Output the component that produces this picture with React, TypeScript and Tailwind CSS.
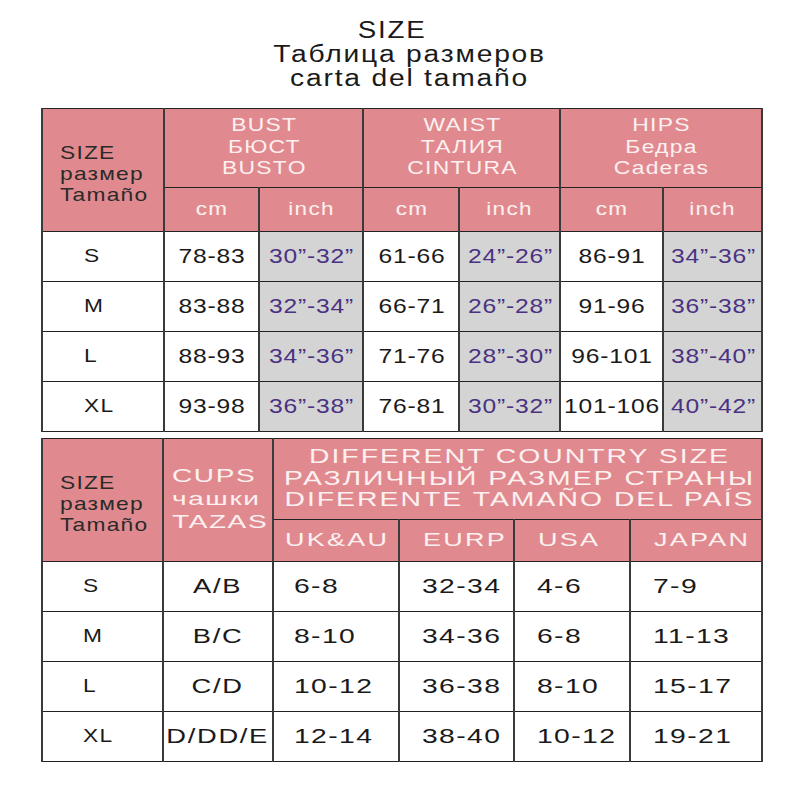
import React from 'react'

const pink = 'bg-[#e08a8f]'
const headTxt = 'text-[#fdf0f0]'

const bodyRows = [
  ['S', '78-83', '30”-32”', '61-66', '24”-26”', '86-91', '34”-36”'],
  ['M', '83-88', '32”-34”', '66-71', '26”-28”', '91-96', '36”-38”'],
  ['L', '88-93', '34”-36”', '71-76', '28”-30”', '96-101', '38”-40”'],
  ['XL', '93-98', '36”-38”', '76-81', '30”-32”', '101-106', '40”-42”'],
]

const countryRows = [
  ['S', 'A/B', '6-8', '32-34', '4-6', '7-9'],
  ['M', 'B/C', '8-10', '34-36', '6-8', '11-13'],
  ['L', 'C/D', '10-12', '36-38', '8-10', '15-17'],
  ['XL', 'D/DD/E', '12-14', '38-40', '10-12', '19-21'],
]

const cell = 'border-y border-y-[#222] border-x-2 border-x-[#3a3a3a] p-0'

// the chart's lettering is wide, so text is stretched sideways
function Wide({ className, children }: { className: string; children: React.ReactNode }) {
  return <span className={`inline-block whitespace-nowrap ${className}`}>{children}</span>
}

function SizeLabel() {
  return (
    <div className="pl-[17px] pt-[10px] text-left">
      <Wide className="origin-left scale-x-[1.23] text-[18.5px] leading-[21px] tracking-[1px] text-[#2a2a2a]">
        <div>SIZE</div>
        <div>размер</div>
        <div>Tamaño</div>
      </Wide>
    </div>
  )
}

export default function App() {
  return (
    <div className="w-[800px] h-[800px] bg-white overflow-hidden" style={{ fontFamily: '"Liberation Sans", Arial, sans-serif' }}>
      {/* title */}
      <div className="pt-[18px] pb-[18px] pl-[20px] text-center text-[23.5px] leading-[24px] tracking-[1.5px] text-[#1a1a1a]">
        <div className="pr-[36px]"><Wide className="scale-x-[1.18]">SIZE</Wide></div>
        <div><Wide className="scale-x-[1.2]">Таблица размеров</Wide></div>
        <div><Wide className="scale-x-[1.2]">carta del tamaño</Wide></div>
      </div>

      {/* body measurements */}
      <table className="ml-[41px] w-[720px] table-fixed border-collapse">
        <colgroup>
          <col className="w-[122px]" />
          <col className="w-[95px]" />
          <col className="w-[104px]" />
          <col className="w-[96px]" />
          <col className="w-[101px]" />
          <col className="w-[103px]" />
          <col className="w-[99px]" />
        </colgroup>
        <thead>
          <tr className="h-[79px]">
            <th rowSpan={2} className={`${cell} ${pink} align-middle font-normal`}>
              <SizeLabel />
            </th>
            {[
              ['BUST', 'БЮСТ', 'BUSTO'],
              ['WAIST', 'ТАЛИЯ', 'CINTURA'],
              ['HIPS', 'Бедра', 'Caderas'],
            ].map(g => (
              <th key={g[0]} colSpan={2} className={`${cell} ${pink} ${headTxt} pl-[2px] align-middle font-normal`}>
                <Wide className="scale-x-[1.27] text-[18px] leading-[21.5px] tracking-[1px]">
                  {g.map(t => <div key={t}>{t}</div>)}
                </Wide>
              </th>
            ))}
          </tr>
          <tr className="h-[44px]">
            {['cm', 'inch', 'cm', 'inch', 'cm', 'inch'].map((t, i) => (
              <th key={i} className={`${cell} ${pink} ${headTxt} pl-[1px] font-normal`}>
                <Wide className="scale-x-[1.25] text-[18px] tracking-[1px]">{t}</Wide>
              </th>
            ))}
          </tr>
        </thead>
        <tbody>
          {bodyRows.map(r => (
            <tr key={r[0]} className="h-[50px]">
              <td className={`${cell} pl-[41px] text-left text-[#1a1a1a]`}>
                <Wide className="origin-left scale-x-[1.3] text-[17.5px] tracking-[1px]">{r[0]}</Wide>
              </td>
              {r.slice(1).map((v, i) => (
                <td
                  key={i}
                  className={`${cell} pl-[1px] text-center ${i % 2 === 1 ? 'bg-[#d4d4d4] text-[#4a3282]' : 'text-[#1a1a1a]'}`}
                >
                  <Wide className="scale-x-[1.2] text-[20.5px] tracking-[0.7px]">{v}</Wide>
                </td>
              ))}
            </tr>
          ))}
        </tbody>
      </table>

      {/* country sizes */}
      <table className="ml-[41px] mt-[6px] w-[720px] table-fixed border-collapse">
        <colgroup>
          <col className="w-[121px]" />
          <col className="w-[110px]" />
          <col className="w-[126px]" />
          <col className="w-[115px]" />
          <col className="w-[116px]" />
          <col className="w-[132px]" />
        </colgroup>
        <thead>
          <tr className="h-[81px]">
            <th rowSpan={2} className={`${cell} ${pink} align-middle font-normal`}>
              <SizeLabel />
            </th>
            <th rowSpan={2} className={`${cell} ${pink} ${headTxt} pl-[8px] text-left align-middle font-normal`}>
              <Wide className="origin-left scale-x-[1.6] text-[17.5px] leading-[23px] tracking-[1px]">
                <div>CUPS</div>
                <div>чашки</div>
                <div>TAZAS</div>
              </Wide>
            </th>
            <th colSpan={4} className={`${cell} ${pink} ${headTxt} pl-[4px] align-middle font-normal`}>
              <Wide className="scale-x-[1.35] text-[21px] leading-[21.5px] tracking-[1.5px]">
                <div>DIFFERENT COUNTRY SIZE</div>
                <div>РАЗЛИЧНЫЙ РАЗМЕР СТРАНЫ</div>
                <div>DIFERENTE TAMAÑO DEL PAÍS</div>
              </Wide>
            </th>
          </tr>
          <tr className="h-[42px]">
            {['UK&AU', 'EURP', 'USA', 'JAPAN'].map((t, i) => (
              <th key={t} className={`${cell} ${pink} ${headTxt} text-left font-normal ${i === 0 ? 'pl-[11px]' : 'pl-[23px]'}`}>
                <Wide className="origin-left scale-x-[1.5] text-[18px] tracking-[1.5px]">{t}</Wide>
              </th>
            ))}
          </tr>
        </thead>
        <tbody>
          {countryRows.map(r => (
            <tr key={r[0]} className="h-[50px]">
              <td className={`${cell} pl-[40px] text-left text-[#1a1a1a]`}>
                <Wide className="origin-left scale-x-[1.3] text-[17.5px] tracking-[1px]">{r[0]}</Wide>
              </td>
              <td className={`${cell} text-center text-[#1a1a1a]`}>
                <Wide className="scale-x-[1.4] text-[19.5px] tracking-[1.2px]">{r[1]}</Wide>
              </td>
              {r.slice(2).map((v, i) => (
                <td key={i} className={`${cell} ${i === 0 ? 'pl-[20px]' : 'pl-[22px]'} text-left text-[#1a1a1a]`}>
                  <Wide className="origin-left scale-x-[1.38] text-[20.5px] tracking-[1px]">{v}</Wide>
                </td>
              ))}
            </tr>
          ))}
        </tbody>
      </table>
    </div>
  )
}
